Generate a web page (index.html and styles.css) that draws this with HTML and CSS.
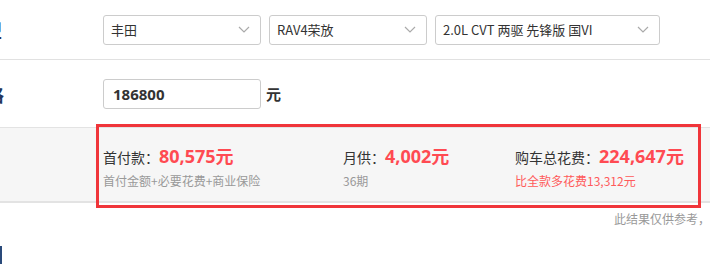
FILE: index.html
```html
<!DOCTYPE html>
<html lang="zh-CN">
<head>
    <meta charset="UTF-8">
    <meta name="viewport" content="width=device-width, initial-scale=1.0">
    <title>贷款计算器</title>
    <link rel="stylesheet" href="styles.css">
</head>
<body>
    <div class="page">
        <div class="row row-car">
            <div class="label">车型</div>
            <div class="select w-157">
                <span>丰田</span>
                <svg class="arrow" width="12" height="7" viewBox="0 0 12 7"><path d="M1 1l5 5 5-5" fill="none" stroke="#aaa" stroke-width="1.2"/></svg>
            </div>
            <div class="select w-157">
                <span>RAV4荣放</span>
                <svg class="arrow" width="12" height="7" viewBox="0 0 12 7"><path d="M1 1l5 5 5-5" fill="none" stroke="#aaa" stroke-width="1.2"/></svg>
            </div>
            <div class="select w-224">
                <span>2.0L CVT 两驱 先锋版 国VI</span>
                <svg class="arrow" width="12" height="7" viewBox="0 0 12 7"><path d="M1 1l5 5 5-5" fill="none" stroke="#aaa" stroke-width="1.2"/></svg>
            </div>
        </div>

        <div class="row row-price">
            <div class="label">裸车价格</div>
            <input class="price-input" type="text" value="186800">
            <span class="unit">元</span>
        </div>

        <div class="band">
            <div class="result">
                <div class="item">
                    <div class="main">首付款：<b>80,575元</b></div>
                    <div class="sub">首付金额+必要花费+商业保险</div>
                </div>
                <div class="item">
                    <div class="main">月供：<b>4,002元</b></div>
                    <div class="sub">36期</div>
                </div>
                <div class="item">
                    <div class="main">购车总花费：<b>224,647元</b></div>
                    <div class="sub red">比全款多花费13,312元</div>
                </div>
            </div>
        </div>

        <p class="note">此结果仅供参考，实际费用以当地4S店为准</p>

        <div class="section-title">
            <span class="title-bar"></span>
        </div>
    </div>
</body>
</html>
```

FILE: styles.css
```css
body {
    margin: 0;
    overflow: hidden;
    font-family: "Noto Sans CJK SC", "Noto Sans", Arial, sans-serif;
    color: #333;
    background-color: #fff;
}
.page {
    width: 710px;
}
.row {
    display: flex;
    align-items: center;
    border-bottom: 1px solid #e1e1e1;
}
.label {
    flex: none;
    width: 70px;
    margin-left: -68px;
    margin-right: 101px;
    text-align: right;
    font-size: 18px;
    font-weight: bold;
    color: #24365c;
    white-space: nowrap;
}
.row-car {
    height: 59px;
    gap: 8px;
}
.row-car .label {
    margin-right: 93px;
}
.select {
    box-sizing: border-box;
    height: 30px;
    padding: 0 10px 0 7px;
    display: flex;
    align-items: center;
    justify-content: space-between;
    border: 1px solid #ccc;
    border-radius: 3px;
    font-size: 13px;
    color: #333;
    white-space: nowrap;
}
.w-157 {
    width: 158px;
}
.w-224 {
    width: 225px;
}
.row-price {
    height: 67px;
    border-bottom: none;
}
.price-input {
    box-sizing: border-box;
    width: 158px;
    height: 30px;
    padding: 0 9px;
    border: 1px solid #ccc;
    border-radius: 3px;
    font-family: "Noto Sans", Arial, sans-serif;
    font-size: 15px;
    font-weight: bold;
    color: #333;
    margin-top: 1px;
}
.unit {
    margin-left: 5px;
    font-size: 15px;
    font-weight: bold;
    color: #333;
}
.band {
    height: 73px;
    background-color: #f6f6f6;
    border-top: 1px solid #e3e3e3;
    border-bottom: 2px solid #e3e3e3;
}
.result {
    position: relative;
    display: grid;
    grid-template-columns: 240px 172px auto;
    margin-left: 103px;
    padding-top: 17px;
}
.result::after {
    content: "";
    position: absolute;
    left: -7px;
    top: -4px;
    width: 599px;
    height: 78px;
    border: 3px solid #f0353a;
}
.main {
    font-size: 14px;
    line-height: 22px;
    color: #333;
    white-space: nowrap;
}
.main b {
    font-family: "Noto Sans", "Noto Sans CJK SC", sans-serif;
    font-size: 18px;
    color: #ff4a52;
}
.sub {
    margin-top: 5px;
    font-size: 12px;
    line-height: 16px;
    color: #999;
}
.sub.red {
    color: #ff5a5a;
}
.note {
    margin: 8px 0 0 614px;
    font-size: 12px;
    line-height: 16px;
    color: #999;
    white-space: nowrap;
}
.section-title {
    margin-top: 19px;
    height: 18px;
    display: flex;
}
.title-bar {
    width: 2px;
    height: 18px;
    background-color: #2a4a7a;
}
```
